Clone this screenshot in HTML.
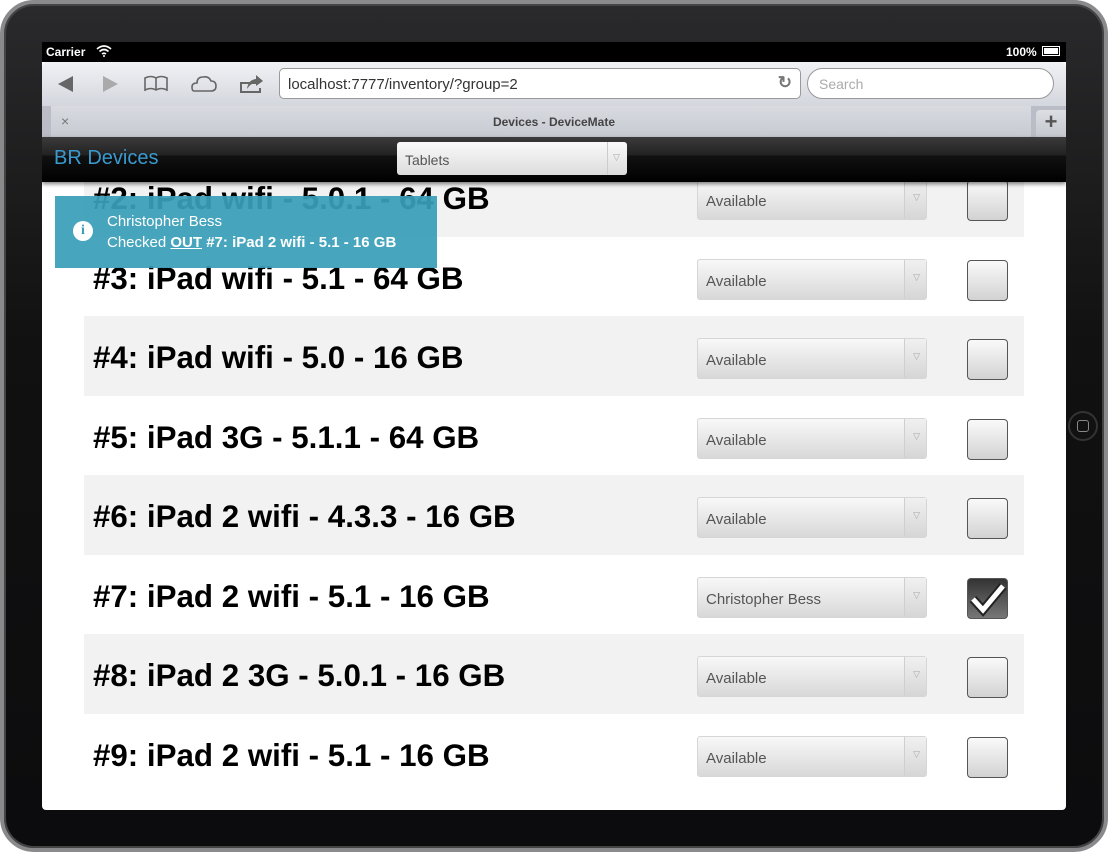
<!DOCTYPE html>
<html><head><meta charset="utf-8"><style>
*{margin:0;padding:0;box-sizing:border-box}
body{width:1108px;height:852px;overflow:hidden;background:#fff;font-family:"Liberation Sans",sans-serif;position:relative}
.frame{position:absolute;left:0;top:0;width:1108px;height:852px;border-radius:34px;background:linear-gradient(#2a2a2c,#111 40%,#0c0c0e);border:4px solid #8a8a8c;box-shadow:inset 0 0 0 2px #444}
.screen{position:absolute;left:42px;top:42px;width:1024px;height:768px;background:#fff;overflow:hidden;border-radius:0 0 4px 4px}
.status{position:absolute;left:0;top:0;width:1024px;height:20px;background:#000;color:#fff;font-size:12px;font-weight:bold}
.toolbar{position:absolute;left:0;top:20px;width:1024px;height:44px;background:linear-gradient(#f1f2f5,#d3d6dd);border-radius:5px 5px 0 0}
.tabbar{position:absolute;left:0;top:64px;width:1024px;height:31px;background:#babdc6}
.tab{position:absolute;left:9px;top:0;width:980px;height:31px;background:linear-gradient(#d8dae0,#c8cad2)}
.header{position:absolute;left:0;top:95px;width:1024px;height:45px;background:linear-gradient(#3b3b3b,#222 40%,#111 42%,#000);box-shadow:0 2px 4px rgba(0,0,0,.5);z-index:5}
.row{position:absolute;left:42px;width:940px;height:79.5px}
.row.g{background:#f2f2f2}
.title{position:absolute;left:9px;top:24px;font-size:31.3px;font-weight:bold;color:#000;white-space:nowrap}
.sel{position:absolute;left:613px;top:22px;width:230px;height:41px;border:1px solid #d6d6d6;border-radius:3px;background:linear-gradient(#f8f8f8,#d8d8d8);font-size:15px;color:#555;padding:13px 8px}
.sel:after{content:"";position:absolute;right:0;top:0;width:21px;height:39px;border-left:1px solid #cfcfcf;background:linear-gradient(#f0f0f0,#d6d6d6)}
.sel i{position:absolute;right:6px;top:12px;font-style:normal;font-size:9px;color:#aaa;z-index:2}
.cb{position:absolute;left:883px;top:23px;width:41px;height:41px;border:1px solid #555;border-radius:4px;background:linear-gradient(#fafafa,#d2d2d2)}
.cb.on{background:linear-gradient(#333,#777)}
</style></head><body>
<div class="frame"></div>
<div style="position:absolute;left:1068px;top:411px;width:30px;height:30px;border-radius:50%;background:#111;border:2px solid #333"><div style="position:absolute;left:7px;top:7px;width:12px;height:12px;border:1.5px solid #888;border-radius:3px"></div></div>
<div class="screen">
<div class="status"><span style="position:absolute;left:4px;top:3px">Carrier</span>
<svg style="position:absolute;left:54px;top:3px" width="16" height="12" viewBox="0 0 16 12"><path d="M1 4Q8-2 15 4M3.5 6.5Q8 2.5 12.5 6.5M6 9Q8 7.5 10 9" stroke="#fff" stroke-width="1.6" fill="none"/><circle cx="8" cy="11" r="1" fill="#fff"/></svg>
<span style="position:absolute;left:964px;top:3px">100%</span>
<div style="position:absolute;left:1000px;top:4px;width:18px;height:10px;border:1px solid #fff;padding:1px"><div style="background:#fff;width:100%;height:100%"></div></div></div>
<div class="toolbar">
<svg style="position:absolute;left:0;top:0" width="240" height="44" viewBox="0 0 240 44">
<path d="M16 22L31 14V30Z" fill="#666"/><path d="M61 14L76 22L61 30Z" fill="#aaa"/>
<path d="M103 16Q109 13 114 16Q119 13 125 16V28Q119 25 114 28Q109 25 103 28Z M114 16V28" stroke="#666" stroke-width="1.6" fill="none"/>
<path d="M152 29H169Q174 29 174 24Q174 19 169 19Q167 14 161 15Q155 15 155 21Q150 21 150 25Q150 29 152 29Z" stroke="#666" stroke-width="1.6" fill="none"/>
<path d="M214 21H199V30H218V26" stroke="#666" stroke-width="2" fill="none"/><path d="M205 27Q206 18 214 17V13L221 19L214 24V21Q209 21 205 27Z" fill="#666"/>
</svg>
<div style="position:absolute;left:237px;top:6px;width:522px;height:31px;background:#fff;border:1px solid #999;border-radius:5px;font-size:15px;color:#333;padding:7px 8px">localhost:7777/inventory/?group=2<span style="position:absolute;right:8px;top:4px;color:#777;font-size:17px;font-weight:bold">↻</span></div>
<div style="position:absolute;left:765px;top:6px;width:247px;height:31px;background:#fff;border:1px solid #999;border-radius:16px;font-size:14px;color:#aaa;padding:7px 11px">Search</div>
</div>
<div class="tabbar"><div class="tab"><span style="position:absolute;left:10px;top:7px;color:#777;font-size:14px">×</span><span style="position:absolute;left:0;width:1006px;text-align:center;top:9px;font-size:12px;font-weight:bold;color:#444">Devices - DeviceMate</span></div>
<div style="position:absolute;left:994px;top:4px;width:30px;height:27px;background:linear-gradient(#dcdee4,#c6c8d0);border-radius:4px 0 0 0;color:#555;font-size:22px;font-weight:bold;text-align:center;line-height:24px">+</div></div>
<div class="header"><span style="position:absolute;left:12px;top:10px;font-size:20px;color:#3a9ad0">BR Devices</span>
<div style="position:absolute;left:355px;top:5px;width:230px;height:33px;border-radius:3px;background:linear-gradient(#fafafa,#dcdcdc);font-size:14px;color:#555;padding:10px 8px">Tablets<span style="position:absolute;right:0;top:0;width:20px;height:33px;border-left:1px solid #ccc;color:#aaa;font-size:9px;padding:10px 5px">▽</span></div></div>
<div class="row g" style="top:115px"><div class="title">#2: iPad wifi - 5.0.1 - 64 GB</div><div class="sel">Available<i>▽</i></div><div class="cb"></div></div>
<div class="row" style="top:194.5px"><div class="title">#3: iPad wifi - 5.1 - 64 GB</div><div class="sel">Available<i>▽</i></div><div class="cb"></div></div>
<div class="row g" style="top:274px"><div class="title">#4: iPad wifi - 5.0 - 16 GB</div><div class="sel">Available<i>▽</i></div><div class="cb"></div></div>
<div class="row" style="top:353.5px"><div class="title">#5: iPad 3G - 5.1.1 - 64 GB</div><div class="sel">Available<i>▽</i></div><div class="cb"></div></div>
<div class="row g" style="top:433px"><div class="title">#6: iPad 2 wifi - 4.3.3 - 16 GB</div><div class="sel">Available<i>▽</i></div><div class="cb"></div></div>
<div class="row" style="top:512.5px"><div class="title">#7: iPad 2 wifi - 5.1 - 16 GB</div><div class="sel">Christopher Bess<i>▽</i></div><div class="cb on"><svg width="39" height="39" viewBox="0 0 39 39"><path d="M5 20L15 31L35 7" stroke="#222" stroke-width="9" fill="none"/><path d="M5 20L15 31L35 7" stroke="#fff" stroke-width="5" fill="none"/></svg></div></div>
<div class="row g" style="top:592px"><div class="title">#8: iPad 2 3G - 5.0.1 - 16 GB</div><div class="sel">Available<i>▽</i></div><div class="cb"></div></div>
<div class="row" style="top:671.5px"><div class="title">#9: iPad 2 wifi - 5.1 - 16 GB</div><div class="sel">Available<i>▽</i></div><div class="cb"></div></div>
<div style="position:absolute;left:13px;top:154px;width:382px;height:72px;background:rgba(58,158,185,.93);z-index:6;color:#fff;font-size:15px">
<div style="position:absolute;left:18px;top:25px;width:20px;height:20px;border-radius:50%;background:#fff;color:#3a9eb9;font-family:'Liberation Serif',serif;font-weight:bold;font-size:14px;text-align:center;line-height:20px">i</div>
<div style="position:absolute;left:52px;top:17px">Christopher Bess</div>
<div style="position:absolute;left:52px;top:38px">Checked <b><u>OUT</u></b> <b>#7: iPad 2 wifi - 5.1 - 16 GB</b></div></div>
</div>
</body></html>
